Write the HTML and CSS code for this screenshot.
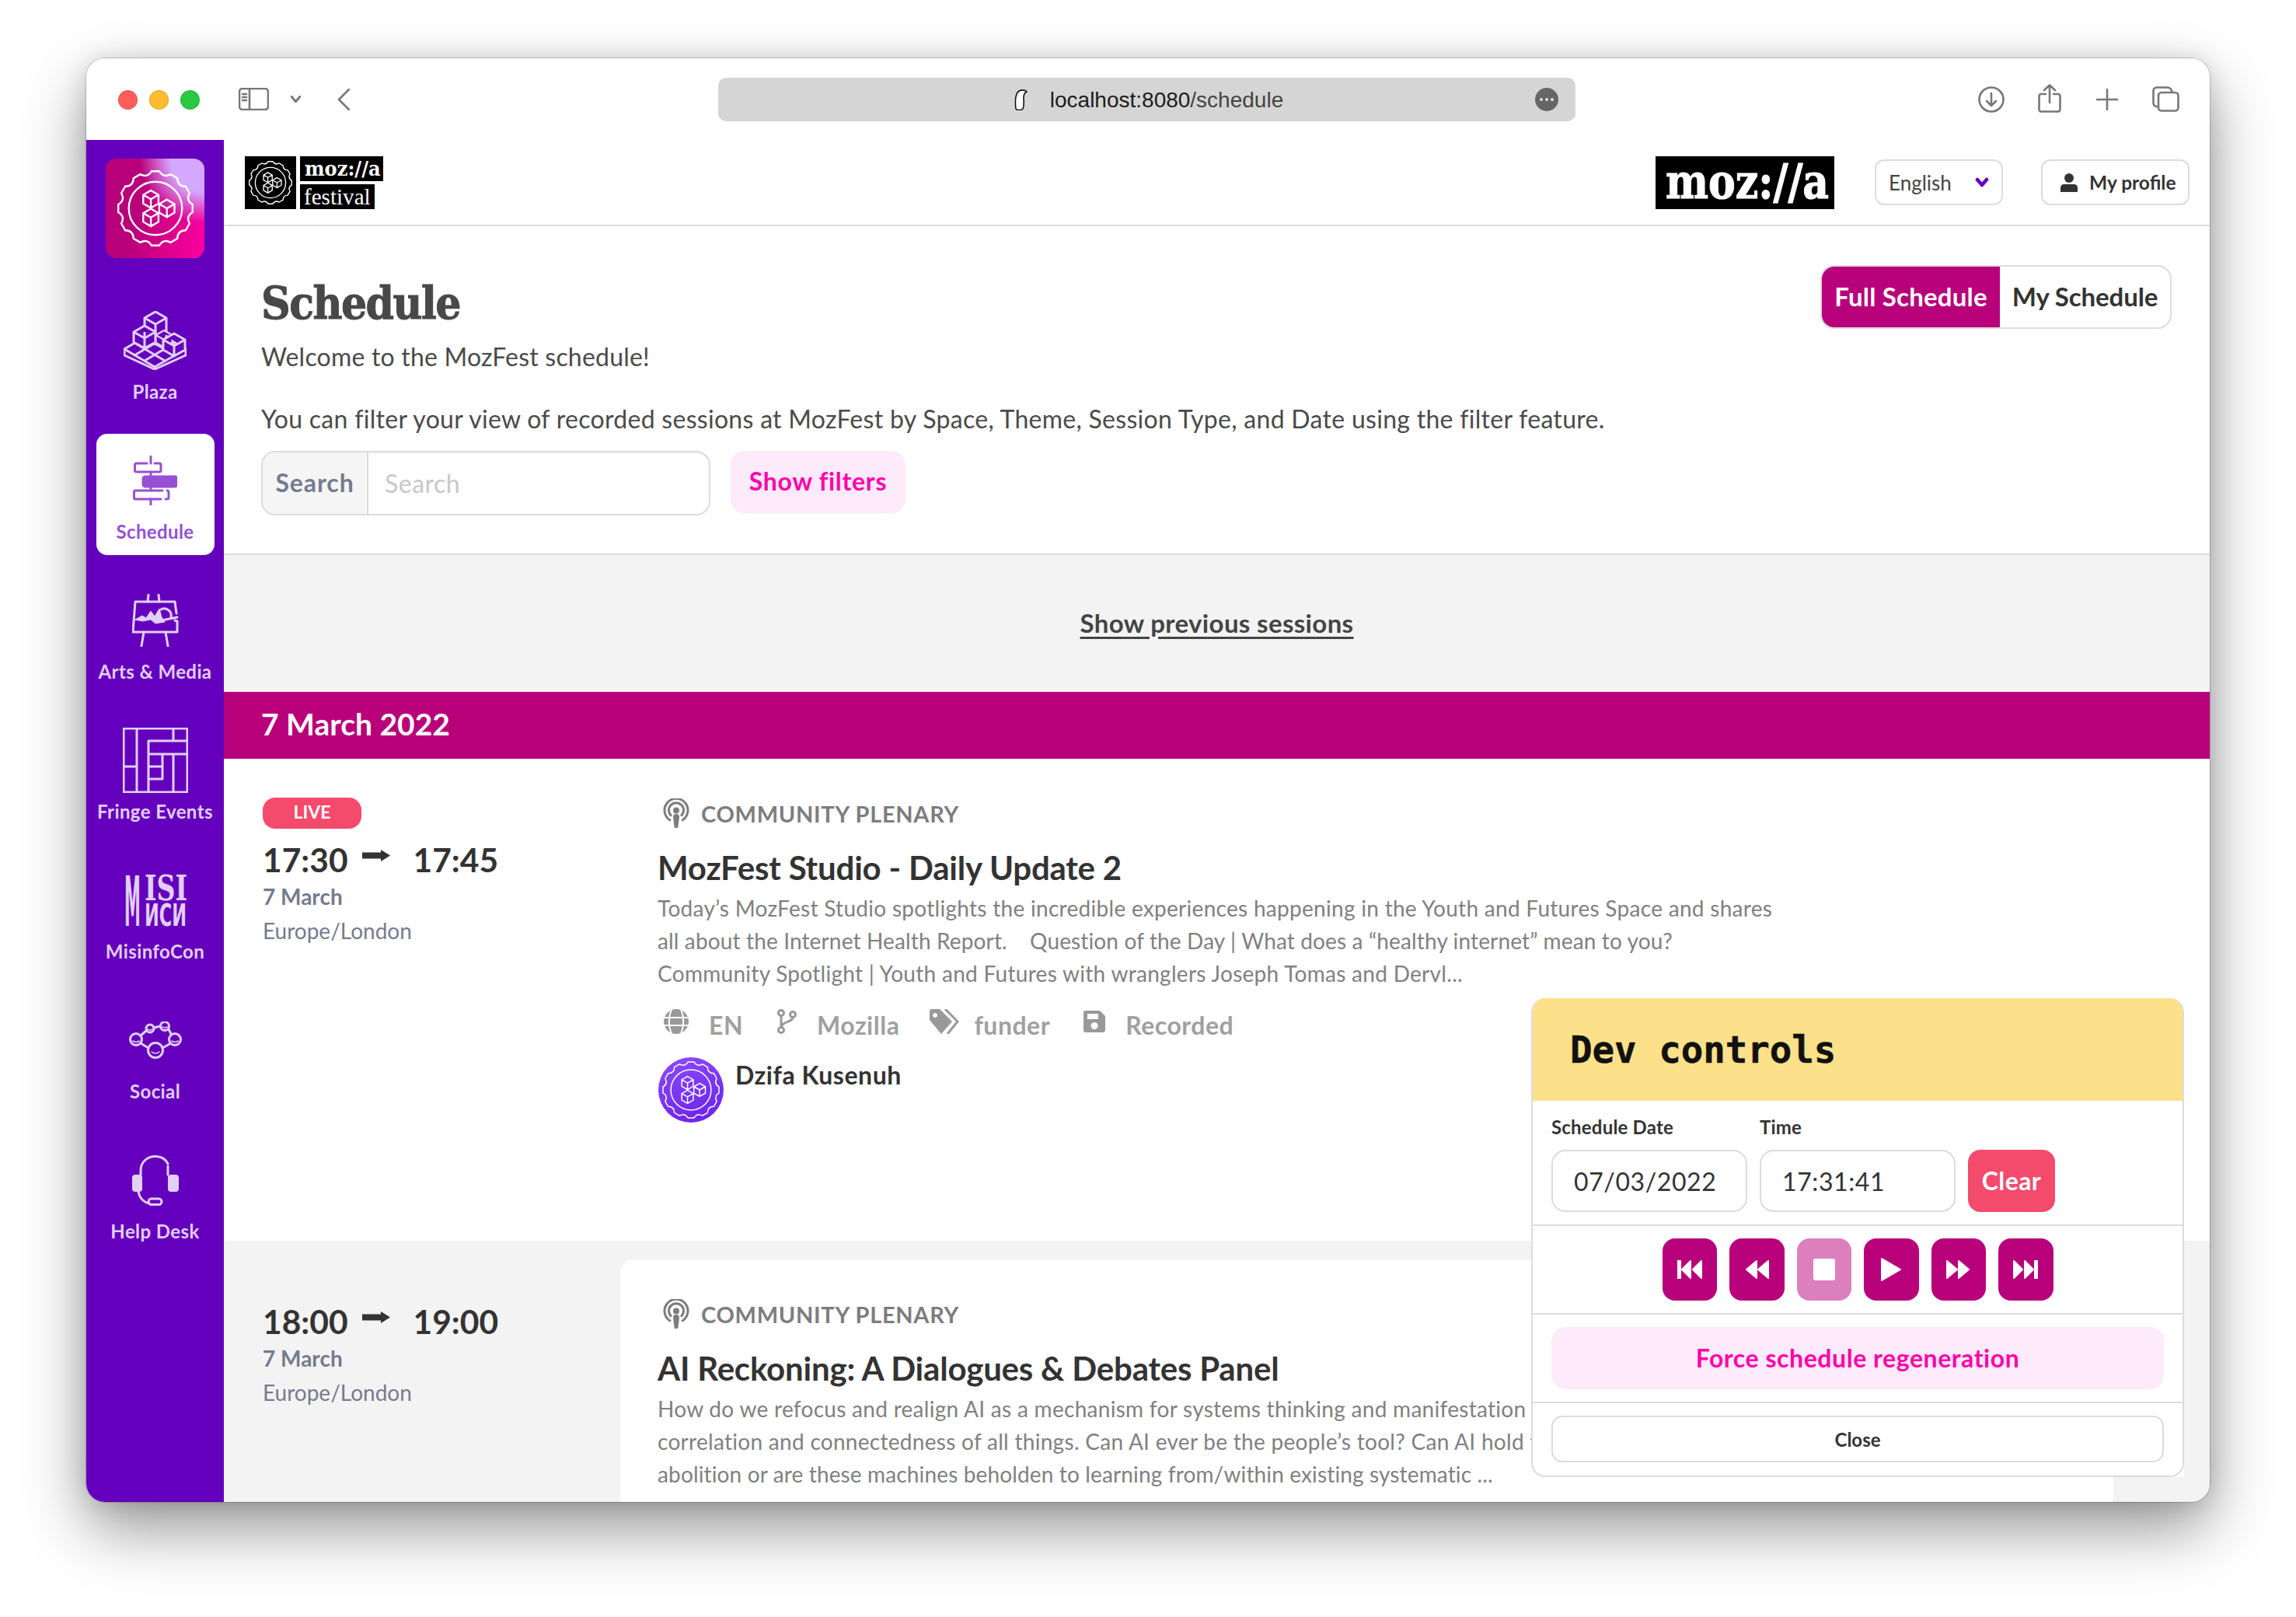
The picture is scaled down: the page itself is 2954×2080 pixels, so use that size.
FILE: index.html
```html
<!DOCTYPE html>
<html lang="en">
<head>
<meta charset="utf-8">
<title>Schedule</title>
<link rel="stylesheet" href="styles.css">
</head>
<body>
<svg class="defs" width="0" height="0" aria-hidden="true">
  <defs>
    <symbol id="gear" viewBox="0 0 100 100">
      <path fill="none" d="M44.88 1.27H55.12Q60.61 10.4 69.93 5.24L78.8 10.36Q78.99 21.01 89.64 21.2L94.76 30.07Q89.6 39.39 98.73 44.88V55.12Q89.6 60.61 94.76 69.93L89.64 78.8Q78.99 78.99 78.8 89.64L69.93 94.76Q60.61 89.6 55.12 98.73H44.88Q39.39 89.6 30.07 94.76L21.2 89.64Q21.01 78.99 10.36 78.8L5.24 69.93Q10.4 60.61 1.27 55.12V44.88Q10.4 39.39 5.24 30.07L10.36 21.2Q21.01 21.01 21.2 10.36L30.07 5.24Q39.39 10.4 44.88 1.27Z"/>
      <circle fill="none" cx="50" cy="50" r="35"/>
      <g fill="none">
        <path d="M44 26.5 54 32.25V43.75L44 49.5 34 43.75V32.25ZM44 38 34 32.25M44 38 54 32.25M44 38V49.5"/>
        <path d="M44 50.5 54 56.25V67.75L44 73.5 34 67.75V56.25ZM44 62 34 56.25M44 62 54 56.25M44 62V73.5"/>
        <path d="M65 38.5 75 44.25V55.75L65 61.5 55 55.75V44.25ZM65 50 55 44.25M65 50 75 44.25M65 50V61.5"/>
      </g>
    </symbol>
    <path id="cube" d="M0-8 14 0 0 8-14 0ZM-14 0V13L0 21 14 13V0M0 8V21"/>
    <path id="cube-tall" d="M0-8 14 0 0 8-14 0ZM-14 0V26L0 34 14 26V0M0 8V34"/>
    <symbol id="podcast" viewBox="0 0 34 38">
      <path fill="none" stroke="currentColor" stroke-width="3" d="M10 28.5A15 15 0 1 1 24 28.5"/>
      <path fill="none" stroke="currentColor" stroke-width="3" d="M11 22.5A9.5 9.5 0 1 1 23 22.5"/>
      <circle cx="17" cy="15.500" r="4" fill="currentColor"/>
      <path fill="currentColor" d="M13 24a4 4 0 0 1 8 0l-1.500 12a2.500 2.500 0 0 1-5 0Z"/>
    </symbol>
    <symbol id="arrow" viewBox="0 0 36 15">
      <path fill="currentColor" d="M0 3.500H24V0L36 7.500 24 15V11.500H0Z"/>
    </symbol>
  </defs>
</svg>

<div class="window">
  <header class="toolbar">
    <div class="lights">
      <span class="light light-red"></span>
      <span class="light light-yellow"></span>
      <span class="light light-green"></span>
    </div>
    <svg class="tb-sidebar" viewBox="0 0 39 29"><rect x="1" y="1" width="37" height="27" rx="4"/><path d="M14 1V28M5 8H10M5 12H10M5 16H10"/></svg>
    <svg class="tb-chevron" viewBox="0 0 12 8"><path d="M1 1 6 7 11 1"/></svg>
    <svg class="tb-back" viewBox="0 0 16 28"><path d="M15 1 2 14 15 27"/></svg>
    <div class="urlbar">
      <svg class="url-shield" viewBox="0 0 18 28"><path d="M2 26C1 18 1 10 4 5 7 1 14 1 16 4 13 5 12 8 12 12 12 17 13 22 11 26 9 28 3 28 2 26Z"/></svg>
      <span class="url-text"><span class="url-host">localhost:8080</span>/schedule</span>
      <span class="url-more"><i></i><i></i><i></i></span>
    </div>
    <svg class="tb-download" viewBox="0 0 34 34"><circle cx="17" cy="17" r="15.500"/><path d="M17 9V25M11 19 17 25 23 19"/></svg>
    <svg class="tb-share" viewBox="0 0 30 37"><path d="M10 13H4Q1.500 13 1.500 16V32Q1.500 35.500 4 35.500H26Q28.500 35.500 28.500 32V16Q28.500 13 26 13H20M15 24V2M8 8 15 1.500 22 8"/></svg>
    <svg class="tb-plus" viewBox="0 0 28 28"><path d="M14 1V27M1 14H27"/></svg>
    <svg class="tb-tabs" viewBox="0 0 35 33"><path d="M6 26Q1.500 26 1.500 21V6Q1.500 1.500 6 1.500H19Q25 1.500 25.500 8"/><rect x="8" y="8" width="25.500" height="23.500" rx="4"/></svg>
  </header>

  <div class="app">
    <nav class="sidebar">
      <div class="brand"><svg class="brand-gear"><use href="#gear"/></svg></div>
      <a class="tile">
        <span class="tile-icon">
          <svg class="ic-plaza" viewBox="0 0 81 76">
            <path d="M1 49 40 26 80 49V57L40 75 1 57Z"/>
            <path d="M1 49 40 72 80 49M40 72V75M14 41 53 64M27 34 66 57M27 64 66 41M14 57 53 34"/>
            <use href="#cube-tall" transform="translate(41 9)"/>
            <use href="#cube" transform="translate(27 27)"/>
            <use href="#cube" transform="translate(52 31) scale(.75)"/>
            <use href="#cube" transform="translate(65 37) scale(1)"/>
          </svg>
        </span>
        <span class="tile-label">Plaza</span>
      </a>
      <a class="tile tile-active">
        <span class="tile-icon">
          <svg class="ic-schedule" viewBox="0 0 57 64">
            <path d="M23 1V10M23 21V27M23 40V45M23 56V63"/>
            <path d="M18 10H5Q2.500 10 2.500 12V19Q2.500 21 5 21H34Q36 21 36 19V12Q36 10 34 10H28"/>
            <rect class="sch-fill" x="13" y="27" width="44" height="13" rx="3"/>
            <path d="M38 45H3Q1.500 45 1.500 47V54Q1.500 56 3 56H36M42 56H44Q46 56 46 54V47Q46 45 44 45"/>
          </svg>
        </span>
        <span class="tile-label">Schedule</span>
      </a>
      <a class="tile">
        <span class="tile-icon">
          <svg class="ic-arts" viewBox="0 0 60 68">
            <path d="M21 1 20 10M34 1 35 10M15 49 12 67M43 49 46 67"/>
            <path d="M55 34 58 35 58 49H1L4 10H55L57 25"/>
            <path class="arts-fill" d="M4 33 13 28 18 31 24 22 29 29 35 19 38 30 42 36 30 38 24 33 14 35Z"/>
            <path d="M37 20A9 9 0 0 1 50 30M38 34 58 30"/>
          </svg>
        </span>
        <span class="tile-label">Arts &amp; Media</span>
      </a>
      <a class="tile">
        <span class="tile-icon">
          <svg class="ic-fringe" viewBox="0 0 84 84">
            <path d="M1 1H83V83H1ZM18 1V83M1 50H18M33 17V83M33 17H83M33 34H83M65 1V17M65 34V83M51 34V66M33 66H51M33 50H51"/>
          </svg>
        </span>
        <span class="tile-label">Fringe Events</span>
      </a>
      <a class="tile">
        <span class="tile-icon">
          <svg class="ic-misi" viewBox="0 0 80 65">
            <text class="misi-m" transform="translate(0 65) scale(.75 3.18)">M</text>
            <text class="misi-top" transform="translate(26 32) scale(1.66 2.2)">ISI</text>
            <text class="misi-bot" transform="translate(26 65) scale(1.12 1.92)">ИСИ</text>
          </svg>
        </span>
        <span class="tile-label">MisinfoCon</span>
      </a>
      <a class="tile">
        <span class="tile-icon">
          <svg class="ic-social" viewBox="0 0 68 48">
            <circle cx="9" cy="23" r="7.500"/><circle cx="27" cy="9" r="5"/><circle cx="46" cy="6" r="5.500"/><circle cx="59" cy="23" r="7.500"/><circle cx="34" cy="37" r="9.500"/>
            <path d="M15 18 22 12M32 8 40 6M51 10 54 16M15 28 25 34M43 34 52 29"/>
            <path class="face" d="M5 25Q9 28 13 25M24 10Q27 12 30 10M43 7Q46 9 49 7M55 25Q59 28 63 25M29 39Q34 43 39 39"/>
          </svg>
        </span>
        <span class="tile-label">Social</span>
      </a>
      <a class="tile">
        <span class="tile-icon">
          <svg class="ic-help" viewBox="0 0 60 65">
            <path d="M11 25V20C11 8 20 1.500 30 1.500 37 1.500 43 5 46 11M46 14V25M8 47C10 57 17 61 22 62"/>
            <rect class="help-fill" x="0" y="25" width="13" height="22" rx="4"/>
            <rect class="help-fill" x="46" y="25" width="14" height="22" rx="4"/>
            <rect x="21" y="56" width="17" height="7.500" rx="3.700"/>
          </svg>
        </span>
        <span class="tile-label">Help Desk</span>
      </a>
    </nav>

    <main class="content">
      <div class="topbar">
        <div class="fest-logo">
          <div class="fest-gear"><svg><use href="#gear"/></svg></div>
          <div class="fest-words">
            <svg class="fest-moz" viewBox="0 0 107 32"><text transform="translate(6 25) scale(.93 1)">moz://a</text></svg>
            <svg class="fest-name" viewBox="0 0 96 32"><text transform="translate(5 26) scale(.97 1)">festival</text></svg>
          </div>
        </div>
        <svg class="moz-logo" viewBox="0 0 230 68"><text transform="translate(13 54) scale(1 1.19)">moz://a</text></svg>
        <button class="top-btn lang-btn">English<svg viewBox="0 0 18 16"><path d="M3 4 9 11 15 4"/></svg></button>
        <button class="top-btn profile-btn"><svg viewBox="0 0 22 24"><circle cx="11" cy="6" r="6"/><path d="M0 24V19Q0 14 5 14H17Q22 14 22 19V24Z"/></svg><span>My profile</span></button>
      </div>

      <section class="intro">
        <div class="intro-head">
          <div>
            <h1 class="page-title">Schedule</h1>
            <p class="lead">Welcome to the MozFest schedule!</p>
          </div>
          <div class="view-toggle">
            <span class="toggle-on">Full Schedule</span>
            <span class="toggle-off">My Schedule</span>
          </div>
        </div>
        <p class="lead lead-2">You can filter your view of recorded sessions at MozFest by Space, Theme, Session Type, and Date using the filter feature.</p>
        <div class="search-row">
          <div class="search">
            <span class="search-addon">Search</span>
            <input class="search-input" type="text" placeholder="Search">
          </div>
          <button class="filters-btn">Show filters</button>
        </div>
      </section>

      <div class="prev-band"><a class="prev-link">Show previous sessions</a></div>
      <div class="date-bar">7 March 2022</div>

      <article class="session session-first">
        <div class="s-time">
          <span class="live">LIVE</span>
          <div class="time-row"><span>17:30</span><svg class="time-arrow"><use href="#arrow"/></svg><span>17:45</span></div>
          <div class="time-date">7 March</div>
          <div class="time-zone">Europe/London</div>
        </div>
        <div class="s-card">
          <div class="s-type"><svg><use href="#podcast"/></svg>COMMUNITY PLENARY</div>
          <h2 class="s-title">MozFest Studio - Daily Update 2</h2>
          <p class="s-desc">Today’s MozFest Studio spotlights the incredible experiences happening in the Youth and Futures Space and shares<br><span class="s-line-tight">all about the Internet Health Report. &nbsp;&nbsp; Question of the Day | What does a “healthy internet” mean to you?</span><br>Community Spotlight | Youth and Futures with wranglers Joseph Tomas and Dervl...</p>
          <div class="s-tags">
            <span class="tag"><svg class="tg-globe" viewBox="0 0 32 32"><circle cx="16" cy="16" r="16"/><path class="cut" d="M0 11H32M0 21H32M10 0C6 10 6 22 10 32M22 0C26 10 26 22 22 32"/></svg>EN</span>
            <span class="tag"><svg class="tg-branch" viewBox="0 0 26 32"><circle cx="6" cy="5" r="3.500"/><circle cx="6" cy="27" r="3.500"/><circle cx="21" cy="7" r="3.500"/><path d="M6 9V23M21 11C21 17 8 15 6 23"/></svg>Mozilla</span>
            <span class="tag"><svg class="tg-tag" viewBox="0 0 40 32"><path class="tf" d="M0 3Q0 0 3 0H13L29 16 15 32 0 14ZM7 5A3 3 0 1 0 7.100 5Z" fill-rule="evenodd"/><path d="M20 0 36 16 23 32" /></svg>funder</span>
            <span class="tag"><svg class="tg-save" viewBox="0 0 28 28"><path fill-rule="evenodd" d="M3 0H21L28 7V25Q28 28 25 28H3Q0 28 0 25V3Q0 0 3 0ZM5 4V11H19V4ZM14 15A4.500 4.500 0 1 0 14.100 15Z"/></svg>Recorded</span>
          </div>
          <div class="speaker">
            <span class="avatar"><svg><use href="#gear"/></svg></span>
            <span class="speaker-name">Dzifa Kusenuh</span>
          </div>
        </div>
      </article>

      <article class="session session-alt">
        <div class="s-time">
          <div class="time-row"><span>18:00</span><svg class="time-arrow"><use href="#arrow"/></svg><span>19:00</span></div>
          <div class="time-date">7 March</div>
          <div class="time-zone">Europe/London</div>
        </div>
        <div class="s-card">
          <div class="s-type"><svg><use href="#podcast"/></svg>COMMUNITY PLENARY</div>
          <h2 class="s-title">AI Reckoning: A Dialogues &amp; Debates Panel</h2>
          <p class="s-desc">How do we refocus and realign AI as a mechanism for systems thinking and manifestation of<br>correlation and connectedness of all things. Can AI ever be the people’s tool? Can AI hold the key to<br><span class="s-line-tight">abolition or are these machines beholden to learning from/within existing systematic ...</span></p>
        </div>
      </article>
    </main>

    <aside class="dev">
      <div class="dev-inner">
        <h3 class="dev-head">Dev controls</h3>
        <div class="dev-row dev-fields">
          <label class="field"><span>Schedule Date</span><input type="text" value="07/03/2022"></label>
          <label class="field"><span>Time</span><input type="text" value="17:31:41"></label>
          <button class="clear-btn">Clear</button>
        </div>
        <div class="dev-row dev-player">
          <button class="pl"><svg viewBox="0 0 32 24"><path d="M0 1H4V23H0ZM17 1V23L6 12ZM31 1V23L20 12Z"/></svg></button>
          <button class="pl"><svg viewBox="0 0 32 24"><path d="M16 1V23L3 12ZM31 1V23L18 12Z"/></svg></button>
          <button class="pl pl-off"><svg viewBox="0 0 28 28"><rect width="28" height="28" rx="3"/></svg></button>
          <button class="pl"><svg viewBox="0 0 28 32"><path d="M2 2 26 16 2 30Z"/></svg></button>
          <button class="pl"><svg viewBox="0 0 32 24"><path d="M1 1V23L14 12ZM16 1V23L29 12Z"/></svg></button>
          <button class="pl"><svg viewBox="0 0 32 24"><path d="M1 1V23L12 12ZM15 1V23L26 12ZM28 1H32V23H28Z"/></svg></button>
        </div>
        <div class="dev-row"><button class="force-btn">Force schedule regeneration</button></div>
        <div class="dev-row dev-last"><button class="close-btn">Close</button></div>
      </div>
    </aside>
  </div>
</div>
</body>
</html>
```
FILE: styles.css
```css
* { box-sizing: border-box; }
html, body { margin: 0; padding: 0; background: #fff; }
body { font-family: "Lato", "Open Sans", sans-serif; color: #333; overflow: hidden; height: 2080px; }
.defs { position: absolute; }
button { font-family: inherit; cursor: pointer; }
h1, h2, h3, p { margin: 0; }

.window {
  width: 2732px; height: 1857px; margin: 75px 0 0 111px;
  border-radius: 24px; overflow: hidden; background: #fff;
  box-shadow: 0 0 0 1px rgba(0,0,0,.18), 0 34px 80px rgba(0,0,0,.42), 0 0 30px rgba(0,0,0,.12);
  display: flex; flex-direction: column; position: relative;
}

/* Browser toolbar */
.toolbar { height: 105px; flex: none; display: flex; align-items: center; padding-left: 41px; background: #fff; }
.toolbar svg { fill: none; stroke: #777; stroke-width: 2.6; stroke-linecap: round; stroke-linejoin: round; flex: none; }
.lights { display: flex; gap: 15px; margin-top: 1px; }
.light { width: 25px; height: 25px; border-radius: 50%; border: 1px solid rgba(0,0,0,.12); }
.light-red { background: #ff5f57; }
.light-yellow { background: #febc2e; }
.light-green { background: #28c840; }
.tb-sidebar { width: 39px; height: 29px; margin-left: 50px; }
.tb-chevron { width: 13px; height: 9px; margin-left: 28px; }
.tb-back { width: 16px; height: 28px; margin-left: 47px; }
.urlbar {
  width: 1103px; height: 56px; margin-left: 474px; margin-top: 1px; border-radius: 10px; background: #d5d5d5;
  display: flex; align-items: center; justify-content: center; position: relative;
  font: 400 28px "Liberation Sans", sans-serif; color: #444; padding-left: 5px;
}
.toolbar .url-shield { width: 18px; height: 28px; margin-right: 28px; fill: #fff; stroke: #111; stroke-width: 1.6; }
.url-text { position: relative; top: 1px; }
.url-host { color: #1c1c1c; }
.url-more { position: absolute; right: 22px; top: 13px; width: 30px; height: 30px; border-radius: 50%; background: #666; display: flex; align-items: center; justify-content: center; gap: 3px; }
.url-more i { width: 4px; height: 4px; border-radius: 50%; background: #ddd; }
.tb-download { width: 34px; height: 34px; margin-left: 518px; }
.tb-share { width: 30px; height: 37px; margin-left: 43px; margin-top: -2px; }
.tb-plus { width: 28px; height: 28px; margin-left: 45px; }
.tb-tabs { width: 35px; height: 33px; margin-left: 44px; }

/* App shell */
.app { flex: 1; min-height: 0; display: flex; position: relative; }
.sidebar { width: 177px; flex: none; background: #6400bd; display: flex; flex-direction: column; align-items: center; padding-top: 24px; gap: 24px; color: #e2cff5; }
.brand {
  width: 127px; height: 128px; margin-bottom: 22px; border-radius: 14px; flex: none;
  background: radial-gradient(circle at 100% 0, #d4a8ff 0 24%, rgba(212,168,255,0) 46%), linear-gradient(100deg, #b8007a 35%, #ff00a0 100%);
  display: flex; align-items: center; justify-content: center;
}
.brand-gear { width: 98px; height: 98px; stroke: #fff; stroke-width: 2.4; }
.tile { width: 152px; height: 156px; flex: none; border-radius: 14px; display: flex; flex-direction: column; align-items: center; padding-top: 10px; }
.tile-icon { height: 100px; display: flex; align-items: center; justify-content: center; }
.tile-icon svg { display: block; fill: none; stroke: currentColor; stroke-width: 3; stroke-linecap: round; stroke-linejoin: round; }
.tile-label { font-size: 24px; line-height: 32px; font-weight: 700; letter-spacing: .4px; white-space: nowrap; }
.tile-active { background: #fff; color: #9650d4; }
.ic-plaza { width: 81px; height: 76px; }
.ic-plaza use, .ic-plaza > path:first-child { fill: #6400bd; }
.ic-schedule { width: 57px; height: 64px; }
.sch-fill { fill: currentColor; }
.ic-arts { width: 60px; height: 68px; }
.arts-fill { fill: currentColor; stroke-width: 1; }
.ic-fringe { width: 84px; height: 84px; }
.ic-misi { width: 80px; height: 65px; overflow: visible; }
.tile-icon .ic-misi { stroke: none; fill: currentColor; }
.misi-m { font: 700 28px "DejaVu Sans", sans-serif; }
.misi-top { font: 700 20px "DejaVu Serif", serif; }
.misi-bot { font: 700 20px "DejaVu Sans", sans-serif; }
.ic-social { width: 68px; height: 48px; }
.face { stroke-width: 1.6; }
.ic-help { width: 60px; height: 65px; }
.help-fill { fill: currentColor; stroke: none; }

/* Content */
.content { flex: 1; min-width: 0; display: flex; flex-direction: column; overflow: hidden; }
.topbar { height: 111px; flex: none; border-bottom: 2px solid #dcdcdc; display: flex; align-items: center; padding: 0 26px 0 27px; }
.fest-logo { display: flex; gap: 5px; margin-right: auto; }
.fest-gear { width: 66px; height: 68px; background: #000; display: flex; align-items: center; justify-content: center; }
.fest-gear svg { width: 56px; height: 58px; stroke: #fff; stroke-width: 2.4; }
.fest-words { display: flex; flex-direction: column; gap: 4px; align-items: flex-start; }
.fest-moz { width: 107px; height: 32px; background: #000; fill: #fff; font: 700 26px "DejaVu Serif", serif; }
.fest-name { width: 96px; height: 32px; background: #000; fill: #fff; font: 400 30px "Liberation Serif", serif; }
.moz-logo { width: 230px; height: 68px; background: #000; fill: #fff; stroke: #fff; stroke-width: 1; font: 700 52px "DejaVu Serif", serif; flex: none; margin-right: 52px; overflow: visible; }
.top-btn { height: 59px; background: #fff; border: 2px solid #dcdcdc; border-radius: 12px; display: flex; align-items: center; color: #444; white-space: nowrap; }
.lang-btn { width: 165px; padding: 0 16px; font-size: 26px; font-weight: 400; justify-content: space-between; margin-right: 49px; }
.lang-btn svg { width: 18px; height: 16px; fill: none; stroke: #6400bd; stroke-width: 4.500; stroke-linecap: round; stroke-linejoin: round; }
.profile-btn { width: 191px; padding: 0 0 0 23px; font-size: 24.500px; font-weight: 700; gap: 15px; color: #333; }
.profile-btn svg { width: 22px; height: 24px; fill: #333; flex: none; }

.intro { flex: none; padding: 50px 49px 49px; border-bottom: 2px solid #dcdcdc; }
.intro-head { display: flex; justify-content: space-between; align-items: flex-start; }
.page-title { font: 700 58px/94px "DejaVu Serif", serif; font-stretch: condensed; letter-spacing: -1.5px; -webkit-text-stroke: 1px #484848; color: #484848; margin-left: -1px; padding-top: 2px; height: 94px; }
.lead { font-size: 32px; line-height: 48px; color: #4a4a4a; letter-spacing: .2px; margin-left: -1px; }
.lead-2 { margin-top: 32px; letter-spacing: .29px; }
.view-toggle { display: flex; height: 82px; width: 452px; border: 2px solid #dcdcdc; border-radius: 18px; overflow: hidden; font-size: 33px; font-weight: 700; flex: none; }
.view-toggle span { display: flex; align-items: center; justify-content: center; padding-bottom: 3px; }
.toggle-on { width: 229px; background: #b8007a; color: #fff; letter-spacing: .2px; }
.toggle-off { flex: 1; color: #333; letter-spacing: -.1px; }
.search-row { display: flex; gap: 26px; margin-top: 17px; align-items: flex-start; }
.search { width: 578px; height: 83px; border: 2px solid #dcdcdc; border-radius: 18px; display: flex; overflow: hidden; box-shadow: inset 0 2px 3px rgba(0,0,0,.05); margin-left: -1px; }
.search-addon { width: 136px; background: #f5f5f5; border-right: 2px solid #dcdcdc; display: flex; align-items: center; justify-content: center; font-size: 32px; font-weight: 700; letter-spacing: .9px; color: #767b8f; padding-bottom: 2px; }
.search-input { flex: 1; min-width: 0; border: 0; outline: 0; background: transparent; padding: 0 21px; font: 400 32px "Lato", sans-serif; letter-spacing: .5px; }
.search-input::placeholder { color: #c8c8c8; opacity: 1; }
.filters-btn { width: 225px; height: 80px; border: 0; border-radius: 18px; background: #fdeafa; color: #ff00aa; font-size: 32px; font-weight: 700; letter-spacing: .75px; padding: 0 0 3px; }

.prev-band { height: 176px; flex: none; background: #f3f3f3; display: flex; align-items: center; justify-content: center; padding-bottom: 2px; }
.prev-link { font-size: 33px; font-weight: 700; letter-spacing: .35px; color: #444; text-decoration: underline; text-underline-offset: 5px; }
.date-bar { height: 86px; flex: none; background: #b8007a; color: #fff; padding: 0 0 4px 48px; display: flex; align-items: center; font-size: 39px; font-weight: 700; }

.session { flex: none; display: flex; background: #fff; }
.session-first { height: 620px; }
.s-time { width: 510px; flex: none; padding: 50px 0 0 50px; }
.s-card { width: 1921px; flex: none; padding: 50px 49px 0; background: #fff; }
.session-alt { background: #f3f3f3; padding-top: 24px; }
.session-alt .s-time { padding-top: 51px; }
.session-alt .s-card { border-radius: 18px 18px 0 0; padding-bottom: 60px; }
.live { display: flex; width: 127px; height: 40px; margin-bottom: 11px; align-items: center; justify-content: center; border-radius: 16px; background: #f44a6b; color: #fff; font-size: 23px; font-weight: 700; padding-bottom: 4px; }
.time-row { display: flex; align-items: center; height: 56px; font-size: 42.500px; font-weight: 700; color: #333; }
.time-arrow { width: 36px; height: 15px; margin: 0 30px 0 18px; position: relative; top: -5px; flex: none; }
.time-date { font-size: 28px; line-height: 40px; font-weight: 700; color: #767b8f; }
.time-zone { font-size: 28px; line-height: 40px; margin-top: 4px; color: #767b8f; }
.s-type { height: 40px; display: flex; align-items: center; font-size: 29px; font-weight: 700; letter-spacing: .7px; color: #7d7d7d; }
.s-type svg { width: 34px; height: 38px; margin: 0 15px 0 6px; flex: none; }
.s-title { margin-top: 24px; font-size: 42px; line-height: 52px; font-weight: 700; letter-spacing: -.2px; color: #333; white-space: nowrap; margin-left: -1px; }
.s-desc { margin-top: 5px; font-size: 28px; line-height: 42px; letter-spacing: .29px; color: #808080; white-space: nowrap; margin-left: -1px; }
.s-line-tight { letter-spacing: .14px; }
.s-tags { margin-top: 25px; height: 40px; display: flex; align-items: center; gap: 43px; font-size: 32px; font-weight: 700; letter-spacing: .5px; color: #a0a0a0; }
.tag { display: flex; align-items: center; gap: 26px; }
.tag svg { fill: #999; flex: none; position: relative; top: -4px; }
.tg-globe { width: 32px; height: 32px; margin-left: 7px; }
.tg-globe .cut { fill: none; stroke: #fff; stroke-width: 2; }
.tg-branch { width: 26px; height: 32px; }
.tg-branch circle { fill: none; stroke: #999; stroke-width: 3; }
.tg-branch path { fill: none; stroke: #999; stroke-width: 3; }
.tg-tag { width: 40px; height: 32px; margin: 0 -9px 0 -4px; }
.tg-tag path:last-child { fill: none; stroke: #999; stroke-width: 3; }
.tg-save { width: 28px; height: 28px; }
.speaker { margin-top: 22px; display: flex; gap: 16px; align-items: flex-start; }
.avatar { width: 84px; height: 84px; border-radius: 50%; background: linear-gradient(160deg, #8a4dff, #6a1fe8); display: flex; align-items: center; justify-content: center; flex: none; }
.avatar svg { width: 74px; height: 74px; stroke: #fff; stroke-width: 2; }
.speaker-name { font-size: 32px; line-height: 46px; font-weight: 700; letter-spacing: .55px; color: #333; margin-left: -1px; }

/* Dev panel */
.dev { position: absolute; right: 33px; bottom: 32px; width: 840px; height: 616px; background: #fff; }
.dev-inner { height: 100%; border: 2px solid #dcdcdc; border-top: 0; border-radius: 18px; overflow: hidden; display: flex; flex-direction: column; background: #fff; }
.dev-head { height: 132px; flex: none; margin: 0 -2px; background: #fde08a; padding-left: 50px; display: flex; align-items: center; font: 700 47.400px "DejaVu Sans Mono", monospace; -webkit-text-stroke: .5px #111; color: #111; }
.dev-row { padding: 16px 24px; border-bottom: 2px solid #dcdcdc; flex: none; }
.dev-fields { display: flex; gap: 16px; align-items: flex-end; padding-top: 18px; height: 161px; }
.field { display: flex; flex-direction: column; width: 252px; font-size: 24px; font-weight: 700; letter-spacing: .2px; color: #333; gap: 14px; line-height: 30px; }
.field input { width: 100%; height: 80px; border: 2px solid #dcdcdc; border-radius: 18px; padding: 0 27px; font: 400 32px "Lato", sans-serif; letter-spacing: .6px; color: #333; outline: 0; }
.clear-btn { width: 112px; height: 80px; border: 0; border-radius: 16px; background: #f44a6b; color: #fff; font-size: 32px; font-weight: 700; letter-spacing: .4px; padding: 0 0 2px; }
.dev-player { display: flex; justify-content: center; gap: 16px; height: 114px; padding-right: 24px; }
.pl { width: 70.500px; height: 80px; border: 0; border-radius: 16px; background: #b8007a; padding: 0; display: flex; align-items: center; justify-content: center; }
.pl svg { width: 32px; height: 26px; fill: #fff; stroke: #fff; stroke-width: 2; stroke-linejoin: round; }
.pl-off { background: #db80bc; }
.pl-off svg { width: 28px; height: 28px; stroke: none; }
.pl:nth-child(4) svg { width: 28px; height: 32px; }
.force-btn { width: 100%; height: 80px; border: 0; border-radius: 18px; background: #fdeafa; color: #ff00aa; font-size: 32px; font-weight: 700; letter-spacing: .55px; padding: 0 0 2px; }
.dev-last { border-bottom: 0; }
.close-btn { width: 100%; height: 60px; border: 2px solid #dcdcdc; border-radius: 14px; background: #fff; color: #333; font-size: 24px; font-weight: 700; }
```
